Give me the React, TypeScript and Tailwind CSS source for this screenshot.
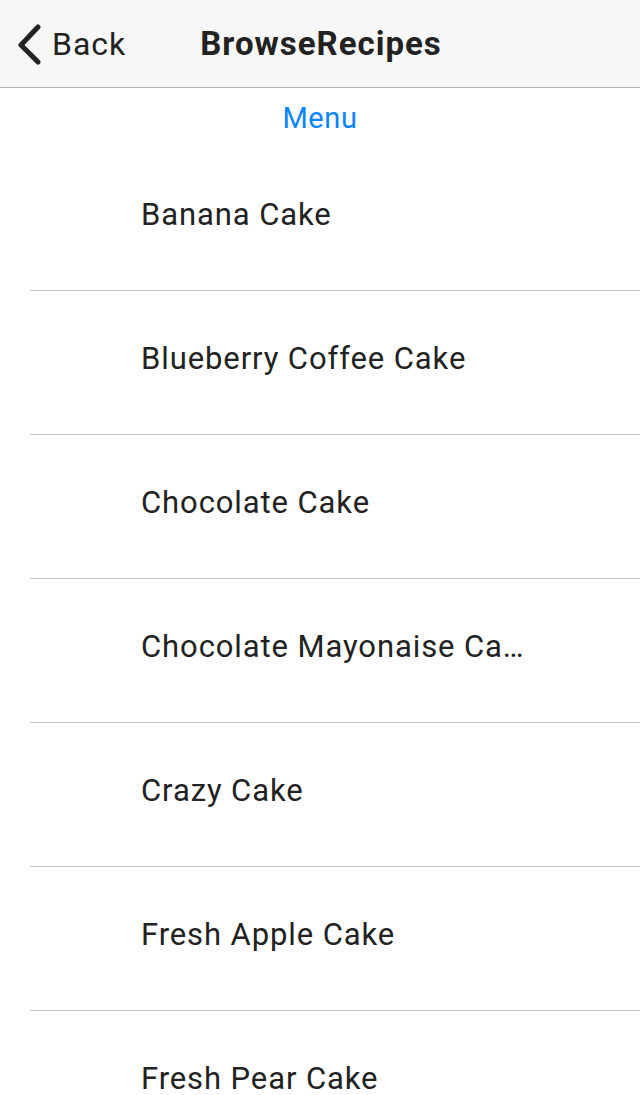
import React from "react";

const items = [
  "Banana Cake",
  "Blueberry Coffee Cake",
  "Chocolate Cake",
  "Chocolate Mayonaise Cake",
  "Crazy Cake",
  "Fresh Apple Cake",
  "Fresh Pear Cake",
];

export default function App() {
  return (
    <div className="w-[640px] h-[1095px] overflow-hidden bg-white" style={{ fontFamily: "Roboto, 'Liberation Sans', sans-serif" }}>
      <div className="h-[88px] bg-[#f7f7f7] border-b border-[#b2b2b2] flex items-center">
        <div className="flex items-center pl-[15px] text-[#222]">
          <svg width="28" height="42" viewBox="0 0 28 42" className="mr-[9px]">
            <path d="M23 4 L6 22 L23 39" fill="none" stroke="#222" strokeWidth="5" strokeLinecap="round" strokeLinejoin="round" />
          </svg>
          <span className="text-[32px] leading-none tracking-[1px]">Back</span>
        </div>
        <span className="ml-[74px] text-[33px] font-bold text-[#222] leading-none tracking-[1px]">BrowseRecipes</span>
      </div>
      <div className="h-[59px] flex justify-center pt-[14px]">
        <span className="text-[29px] text-[#0a84ff] leading-[32px] tracking-[0.6px]">Menu</span>
      </div>
      <div>
        {items.map((it, i) => (
          <div key={it} className={"h-[144px] ml-[30px] flex items-center " + (i < items.length - 1 ? "border-b border-[#c8c8c8]" : "")}>
            <span className="pl-[111px] pr-[110px] text-[31px] text-[#222] truncate leading-[36px] pb-[8px] tracking-[0.9px]">{it}</span>
          </div>
        ))}
      </div>
    </div>
  );
}
